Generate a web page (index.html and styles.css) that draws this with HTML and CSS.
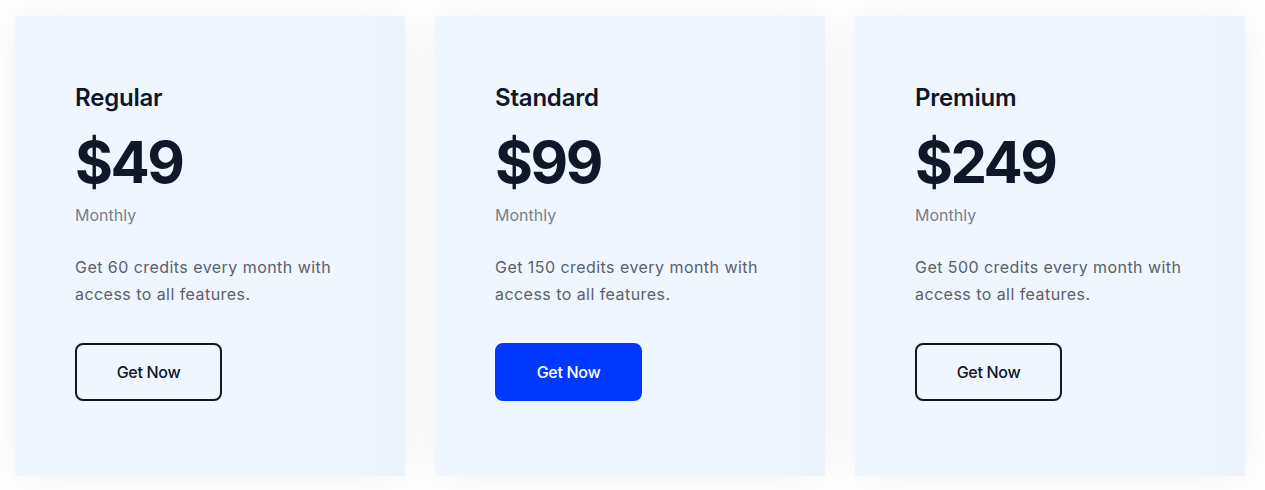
FILE: index.html
```html
<!DOCTYPE html>
<html lang="en">
<head>
<meta charset="utf-8">
<title>Pricing</title>
<link rel="stylesheet" href="styles.css">
</head>
<body>
<div class="plans">
  <div class="card">
    <h3 class="name">Regular</h3>
    <div class="price">$49</div>
    <div class="period">Monthly</div>
    <p class="desc">Get 60 credits every month with access to all features.</p>
    <a class="btn" href="#">Get Now</a>
  </div>
  <div class="card">
    <h3 class="name">Standard</h3>
    <div class="price">$99</div>
    <div class="period">Monthly</div>
    <p class="desc">Get 150 credits every month with access to all features.</p>
    <a class="btn btn-primary" href="#">Get Now</a>
  </div>
  <div class="card">
    <h3 class="name">Premium</h3>
    <div class="price">$249</div>
    <div class="period">Monthly</div>
    <p class="desc">Get 500 credits every month with access to all features.</p>
    <a class="btn" href="#">Get Now</a>
  </div>
</div>
</body>
</html>
```
FILE: styles.css
```css
html, body {
  margin: 0;
  background: #ffffff;
}
body {
  font-family: Inter, "Noto Sans", sans-serif;
  color: #0f172a;
}
.plans {
  display: flex;
  gap: 30px;
  padding: 16px 15px;
}
.card {
  width: 390px;
  height: 460px;
  box-sizing: border-box;
  padding: 67px 60px 0;
  background: linear-gradient(90deg, #eff6ff 0%, #eff6ff 85%, #edf3fc 100%);
  box-shadow: 0 0 40px rgba(0, 0, 0, 0.06);
  display: flex;
  flex-direction: column;
  align-items: flex-start;
}
.name {
  margin: 0;
  font-size: 24px;
  line-height: 30px;
  font-weight: 600;
  letter-spacing: -0.2px;
  color: #0f172a;
}
.price {
  margin-top: 16px;
  font-size: 58px;
  line-height: 66px;
  font-weight: 700;
  letter-spacing: -2.5px;
  color: #0f172a;
}
.period {
  margin-top: 8px;
  font-size: 16px;
  line-height: 24px;
  color: #7b7f87;
}
.desc {
  margin: 27px 0 0;
  font-size: 16px;
  line-height: 27px;
  letter-spacing: 0.45px;
  color: #5b606b;
  max-width: 280px;
}
.btn {
  margin-top: 35px;
  width: 147px;
  height: 58px;
  box-sizing: border-box;
  border: 2px solid #0f172a;
  border-radius: 8px;
  display: flex;
  align-items: center;
  justify-content: center;
  font-size: 16px;
  font-weight: 500;
  letter-spacing: -0.3px;
  color: #0f172a;
  text-decoration: none;
}
.btn-primary {
  background: #0038ff;
  border-color: #0038ff;
  color: #ffffff;
}
```
